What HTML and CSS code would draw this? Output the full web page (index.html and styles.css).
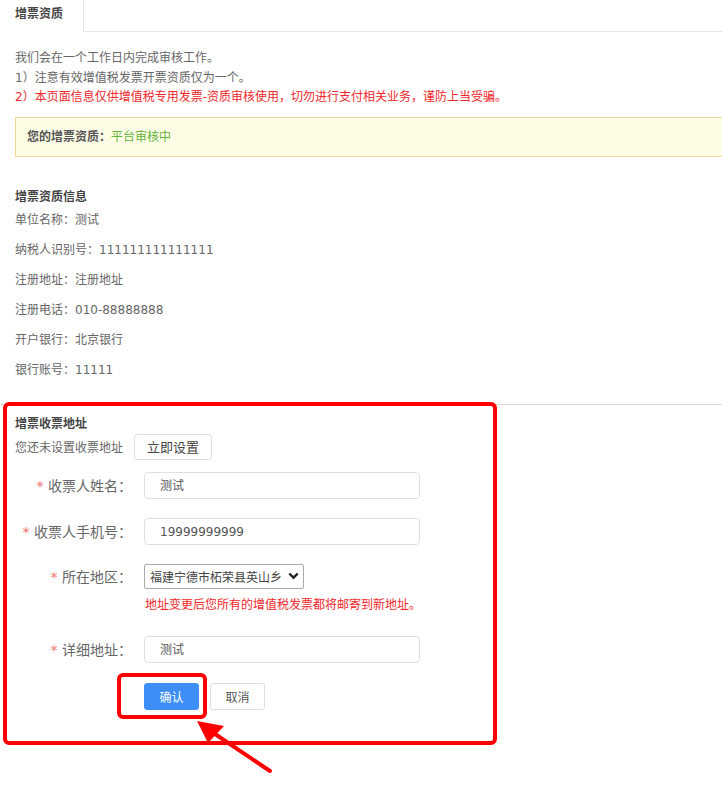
FILE: index.html
```html
<!DOCTYPE html>
<html lang="zh-CN">
<head>
<meta charset="utf-8">
<title>增票资质</title>
<link rel="stylesheet" href="styles.css">
</head>
<body>
<div class="page">
  <div class="tabs">
    <div class="tab">增票资质</div>
    <div class="tab-rest"></div>
  </div>

  <div class="notice">
    <p>我们会在一个工作日内完成审核工作。</p>
    <p>1）注意有效增值税发票开票资质仅为一个。</p>
    <p class="warn">2）本页面信息仅供增值税专用发票-资质审核使用，切勿进行支付相关业务，谨防上当受骗。</p>
  </div>

  <div class="status-box">
    <span class="status-label">您的增票资质：</span><span class="status-value">平台审核中</span>
  </div>

  <div class="info">
    <h3 class="section-title">增票资质信息</h3>
    <div class="info-row">单位名称：测试</div>
    <div class="info-row">纳税人识别号：111111111111111</div>
    <div class="info-row">注册地址：注册地址</div>
    <div class="info-row">注册电话：010-88888888</div>
    <div class="info-row">开户银行：北京银行</div>
    <div class="info-row">银行账号：11111</div>
  </div>

  <div class="address">
    <h3 class="section-title">增票收票地址</h3>
    <div class="unset">
      <span>您还未设置收票地址</span>
      <button class="btn btn-plain btn-set">立即设置</button>
    </div>

    <form class="form">
      <div class="form-row">
        <label class="form-label"><span class="req">*</span> 收票人姓名：</label>
        <div class="input">测试</div>
      </div>
      <div class="form-row">
        <label class="form-label"><span class="req">*</span> 收票人手机号：</label>
        <div class="input">19999999999</div>
      </div>
      <div class="form-row row-select">
        <label class="form-label"><span class="req">*</span> 所在地区：</label>
        <div class="select">
          <span>福建宁德市柘荣县英山乡</span>
          <svg class="chevron" width="11" height="8" viewBox="0 0 11 8"><path d="M1.3 1.5 L5.5 5.7 L9.7 1.5" fill="none" stroke="#222" stroke-width="2.4"/></svg>
        </div>
      </div>
      <div class="hint">地址变更后您所有的增值税发票都将邮寄到新地址。</div>
      <div class="form-row row-detail">
        <label class="form-label"><span class="req">*</span> 详细地址：</label>
        <div class="input">测试</div>
      </div>
      <div class="actions">
        <button type="button" class="btn btn-primary">确认</button>
        <button type="button" class="btn btn-plain">取消</button>
      </div>
    </form>
  </div>

  <!-- annotation marks drawn over the form -->
  <div class="mark mark-section"></div>
  <div class="mark mark-button"></div>
  <svg class="mark-arrow" width="90" height="70" viewBox="0 0 90 70">
    <line x1="78" y1="59" x2="20" y2="20" stroke="#f00" stroke-width="4" stroke-linecap="round"/>
    <polygon points="5,9 32,14 16,31" fill="#f00"/>
  </svg>
</div>
</body>
</html>
```

FILE: styles.css
```css
* { box-sizing: border-box; }

html, body {
  margin: 0;
  padding: 0;
  background: #fff;
}

body {
  font-family: "DejaVu Sans", "Noto Sans CJK SC", sans-serif;
  font-size: 12px;
  color: #666;
  overflow: hidden;
}

.page {
  position: relative;
  width: 722px;
  min-height: 785px;
}

/* tab strip */
.tabs {
  display: flex;
  height: 32px;
}
.tab {
  width: 84px;
  padding-left: 15px;
  line-height: 29px;
  font-weight: bold;
  color: #444;
  border-right: 1px solid #e6e6e6;
}
.tab-rest {
  flex: 1;
  border-bottom: 1px solid #e6e6e6;
}

/* notes */
.notice {
  padding: 0 15px;
  margin-top: 17px;
}
.notice p {
  margin: 0;
  line-height: 19.5px;
}
.notice .warn {
  color: #f0272b;
}

/* status box */
.status-box {
  margin: 9px 0 0 15px;
  height: 40px;
  padding-left: 11px;
  line-height: 38px;
  background: #fffce6;
  border: 1px solid #f2d995;
  border-right: 0;
}
.status-label {
  font-weight: bold;
  color: #555;
}
.status-value {
  color: #62b43a;
}

/* qualification info */
.section-title {
  margin: 0;
  font-size: 12px;
  font-weight: bold;
  color: #444;
  line-height: 16px;
}
.info {
  padding: 0 15px;
  margin-top: 32px;
  padding-bottom: 19px;
  border-bottom: 1px solid #d9d9d9;
}
.info-row {
  line-height: 30px;
}

/* invoice address */
.address {
  padding: 11px 15px 0;
}
.unset {
  display: flex;
  align-items: center;
  margin-top: 2px;
}
.btn {
  font-family: inherit;
  font-size: 12px;
  border-radius: 3px;
  cursor: pointer;
  padding: 0;
}
.btn-plain {
  background: #fff;
  color: #555;
  border: 1px solid #dcdfe6;
}
.btn-set {
  width: 78px;
  height: 26px;
  margin-left: 11px;
  font-size: 13px;
  color: #444;
}

.form {
  margin-top: 12px;
}
.form-row {
  display: flex;
  align-items: center;
  margin-bottom: 19px;
}
.form-label {
  width: 117px;
  margin-right: 12px;
  text-align: right;
  font-size: 14px;
  color: #666;
  white-space: nowrap;
}
.req {
  color: #f56c6c;
}
.input {
  width: 276px;
  height: 27px;
  border: 1px solid #dcdfe6;
  border-radius: 4px;
  padding: 2px 0 0 15px;
  line-height: 23px;
  font-size: 12px;
  color: #555;
}
.row-select {
  margin-top: 1px;
  margin-bottom: 6px;
}
.select {
  display: flex;
  align-items: center;
  gap: 6px;
  width: 160px;
  height: 25px;
  padding-left: 5px;
  border: 1px solid #aaa;
  border-radius: 2px;
  color: #444;
  font-size: 12px;
}
.chevron {
  flex: none;
}
.hint {
  margin-left: 130px;
  padding-top: 2px;
  line-height: 16px;
  color: #f0272b;
  font-size: 12px;
}
.row-detail {
  margin-top: 23px;
  margin-bottom: 20px;
}

.actions {
  display: flex;
  gap: 11px;
  margin-left: 129px;
}
.actions .btn {
  width: 55px;
  height: 27px;
}
.btn-primary {
  background: #3e8ef7;
  border: 1px solid #3e8ef7;
  color: #fff;
}

/* annotation marks */
.mark {
  position: absolute;
  border: 4px solid #ff0000;
  border-radius: 6px;
  pointer-events: none;
}
.mark-section {
  left: 3px;
  top: 402px;
  width: 494px;
  height: 343px;
}
.mark-button {
  left: 117px;
  top: 673px;
  width: 90px;
  height: 46px;
}
.mark-arrow {
  position: absolute;
  left: 192px;
  top: 712px;
}
```
